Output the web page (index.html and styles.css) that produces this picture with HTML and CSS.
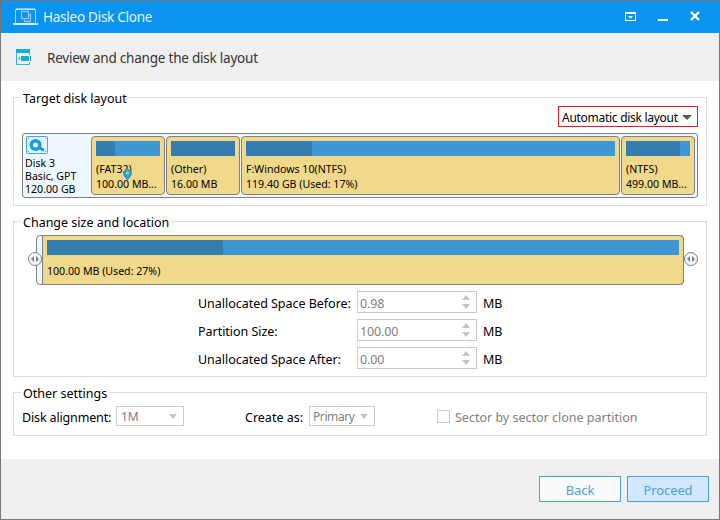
FILE: index.html
```html
<!DOCTYPE html>
<html lang="en">
<head>
    <meta charset="UTF-8" />
    <title>Hasleo Disk Clone</title>
    <link rel="stylesheet" href="styles.css">
</head>
<body>
    <div class="window">
        <div class="titlebar">
            <svg class="logo" width="26" height="18" viewBox="0 0 26 18" fill="none" stroke="#9fd2fa">
                <path d="M2.500 15V1.500h20V15" />
                <path d="M3 1h19" stroke="#e8f5ff" />
                <path d="M0 16h25" stroke="#d5ecfd" stroke-width="2" />
                <rect x="8.500" y="3.500" width="7" height="7" stroke="#8fcaf8" stroke-width="1.300" />
                <path d="M15.500 6.500h2v7h-6v-3" stroke="#8fcaf8" stroke-width="1.300" />
            </svg>
            <span class="app-name">Hasleo Disk Clone</span>
            <svg class="win-icons" width="77" height="12" viewBox="0 0 77 12">
                <path d="M0 1h11v9H0zM1 3v6h9V3z" fill="#fff" fill-rule="evenodd" />
                <path d="M3 5h5L5.500 7.800z" fill="#fff" />
                <path d="M33 8h10v2H33z" fill="#fff" />
                <path d="M66 1l8 8M74 1l-8 8" stroke="#fff" stroke-width="2.400" />
            </svg>
        </div>

        <div class="header">
            <svg width="15" height="16" viewBox="0 0 15 16" fill="#0caedb">
                <path d="M0 0h14v4H0z" />
                <path d="M.5 4v11.500h13V13M13.500 4v2" fill="none" stroke="#29b5dc" />
                <path d="M5 7h8v5H5zM2 9.500l2-1.500v3zM14 7h1v5h-1z" />
            </svg>
            <span>Review and change the disk layout</span>
        </div>

        <div class="content">
            <div class="group group-layout">
                <span class="group-title">Target disk layout</span>
                <div class="select select-layout">
                    <span>Automatic disk layout</span>
                    <i class="arrow"></i>
                </div>
                <div class="disk">
                    <div class="disk-info">
                        <svg width="22" height="18" viewBox="0 0 22 18">
                            <rect x=".5" y=".5" width="21" height="17" rx="1" fill="#e4f5fd" stroke="#35a9e1" />
                            <circle cx="9.500" cy="9" r="4.300" fill="none" stroke="#1e9bdc" stroke-width="3.600" />
                            <path d="M12.500 11l5.500 3.500" stroke="#1e9bdc" stroke-width="3" />
                            <path d="M2 2h1v1H2zM19 2h1v1h-1zM2 15h1v1H2zM19 15h1v1h-1z" fill="#1e9bdc" />
                        </svg>
                        <span>Disk 3</span>
                        <span>Basic, GPT</span>
                        <span>120.00 GB</span>
                    </div>
                    <div class="part">
                        <div class="bar"><div class="used" style="width: 19px"></div></div>
                        <span>(FAT32)</span>
                        <span>100.00 MB...</span>
                        <svg class="pin" width="9" height="12" viewBox="0 0 9 12">
                            <path d="M4.500 0A4.500 4.500 0 0 0 0 4.500C0 7 3 9 4.500 12 6 9 9 7 9 4.500A4.500 4.500 0 0 0 4.500 0z" fill="#2a9fda" />
                            <circle cx="4.500" cy="4" r="1.500" fill="#cfc98c" />
                        </svg>
                    </div>
                    <div class="part">
                        <div class="bar"><div class="used" style="width: 100%"></div></div>
                        <span>(Other)</span>
                        <span>16.00 MB</span>
                    </div>
                    <div class="part part-main">
                        <div class="bar"><div class="used" style="width: 66px"></div></div>
                        <span>F:Windows 10(NTFS)</span>
                        <span>119.40 GB (Used: 17%)</span>
                    </div>
                    <div class="part">
                        <div class="bar"><div class="used" style="width: 54px"></div></div>
                        <span>(NTFS)</span>
                        <span>499.00 MB...</span>
                    </div>
                </div>
            </div>

            <div class="group group-size">
                <span class="group-title">Change size and location</span>
                <div class="resizer">
                    <div class="track">
                        <div class="part part-resize">
                            <div class="bar"><div class="used" style="width: 176px"></div></div>
                            <span>100.00 MB (Used: 27%)</span>
                        </div>
                    </div>
                    <svg class="handle handle-left" width="14" height="14" viewBox="0 0 14 14">
                        <circle cx="7" cy="7" r="6.500" fill="#eef7fd" stroke="#808080" />
                        <path d="M6 4v6L3 7zM8 4v6l3-3z" fill="#808080" />
                    </svg>
                    <svg class="handle handle-right" width="14" height="14" viewBox="0 0 14 14">
                        <circle cx="7" cy="7" r="6.500" fill="#eef7fd" stroke="#808080" />
                        <path d="M6 4v6L3 7zM8 4v6l3-3z" fill="#808080" />
                    </svg>
                </div>
                <div class="fields">
                    <label>Unallocated Space Before:</label>
                    <div class="spin"><span>0.98</span><i class="up"></i><i class="arrow"></i></div>
                    <span>MB</span>
                    <label>Partition Size:</label>
                    <div class="spin"><span>100.00</span><i class="up"></i><i class="arrow"></i></div>
                    <span>MB</span>
                    <label>Unallocated Space After:</label>
                    <div class="spin"><span>0.00</span><i class="up"></i><i class="arrow"></i></div>
                    <span>MB</span>
                </div>
            </div>

            <div class="group group-other">
                <span class="group-title">Other settings</span>
                <div class="settings">
                    <label class="lbl-align">Disk alignment:</label>
                    <div class="select select-align"><span>1M</span><i class="arrow"></i></div>
                    <label class="lbl-create">Create as:</label>
                    <div class="select select-create"><span>Primary</span><i class="arrow"></i></div>
                    <div class="checkbox"></div>
                    <label class="lbl-sector">Sector by sector clone partition</label>
                </div>
            </div>
        </div>

        <div class="footer">
            <div class="btn">Back</div>
            <div class="btn btn-primary">Proceed</div>
        </div>
    </div>
</body>
</html>
```
FILE: styles.css
```css
* {
    box-sizing: border-box;
}
body {
    margin: 0;
    font-family: "Noto Sans", "Open Sans", sans-serif;
    font-size: 12.5px;
    color: #000;
}
svg {
    display: block;
    flex: none;
}
span, label {
    white-space: nowrap;
}
.window {
    width: 720px;
    height: 520px;
    border: 1px solid #777;
    background: #fff;
    display: flex;
    flex-direction: column;
}
.titlebar {
    height: 32px;
    background: #0b93f0;
    display: flex;
    align-items: center;
    padding: 0 17px 0 12px;
}
.app-name {
    color: #e8f5ff;
    font-size: 13.5px;
    letter-spacing: -0.25px;
    margin-left: 4px;
    flex: 1;
}
.header {
    height: 48px;
    background: #efefef;
    display: flex;
    align-items: center;
    gap: 16px;
    padding: 2px 15px 0;
    font-size: 13.5px;
    letter-spacing: -0.22px;
    color: #333;
}
.header svg {
    margin-top: -2px;
}
.content {
    height: 378px;
    padding: 16px 12px 0;
}
.group {
    position: relative;
    border: 1px solid #dcdcdc;
}
.group-title {
    position: absolute;
    top: -8px;
    left: 7px;
    padding: 0 2px;
    background: #fff;
    line-height: 18px;
}
.group-layout {
    height: 109px;
    padding: 8px 8px 0;
}
.group-size {
    height: 156px;
    margin-top: 15px;
    padding: 13px 21px 0 22px;
}
.group-other {
    height: 44px;
    margin-top: 15px;
    padding: 13px 8px 0;
}

/* selects */
.select {
    height: 20px;
    border: 1px solid #ccc;
    display: flex;
    align-items: center;
    justify-content: space-between;
    padding: 0 6px 0 4px;
    color: #808080;
}
.select-layout {
    width: 140px;
    height: 21px;
    margin: 0 0 6px auto;
    border: 1px solid #e81c24;
    padding: 2px 5px 0 3px;
    font-size: 12px;
    letter-spacing: -0.28px;
    color: #000;
}
.arrow {
    border: 4px solid transparent;
    border-top: 5px solid #c4c4c4;
    border-bottom: none;
}
.up {
    border: 4px solid transparent;
    border-bottom: 5px solid #c4c4c4;
    border-top: none;
}
.select-layout .arrow {
    border-top-color: #555;
    border-left-width: 5px;
    border-right-width: 5px;
}

/* disk map */
.disk {
    height: 65px;
    width: 676px;
    border: 1px solid #808080;
    border-radius: 3px;
    background: #eef7fd;
    display: flex;
    gap: 1px;
    padding: 2px;
    font-size: 10.6px;
}
.disk-info {
    width: 65px;
    display: flex;
    flex-direction: column;
    line-height: 13px;
}
.disk-info svg {
    margin: 0 0 3px 1px;
}
.part {
    position: relative;
    width: 74px;
    height: 59px;
    border: 1px solid #808080;
    border-radius: 4px;
    background: #f0d98a;
    padding: 4px;
    display: flex;
    flex-direction: column;
    line-height: 15px;
}
.part-main {
    flex: 1;
}
.bar {
    height: 15px;
    background: #3e97d3;
    margin-bottom: 6px;
}
.used {
    height: 15px;
    background: #347dae;
}
.pin {
    position: absolute;
    left: 31px;
    top: 32px;
}

/* partition resizer */
.resizer {
    position: relative;
    font-size: 10.6px;
}
.track {
    width: 648px;
    height: 50px;
    border: 1px solid #808080;
    border-radius: 4px;
    background: #eef7fd;
    padding-left: 5px;
}
.part-resize {
    width: 642px;
    height: 50px;
    margin-top: -1px;
    border-radius: 0 4px 4px 0;
}
.part-resize .bar {
    margin-bottom: 9px;
}
.handle {
    position: absolute;
    top: 17px;
}
.handle-left {
    left: -8px;
}
.handle-right {
    right: -13px;
}
.fields {
    display: grid;
    grid-template-columns: 159px 120px auto;
    row-gap: 6px;
    align-items: center;
    padding: 6px 0 0 162px;
}
.fields > span {
    margin-left: 6px;
}
.fields > span, .fields label {
    padding-top: 2px;
}
.fields label {
    letter-spacing: -0.03px;
}
.spin {
    height: 22px;
    border: 1px solid #c8c8c8;
    color: #808080;
    display: grid;
    grid-template-columns: 1fr 8px;
    grid-template-rows: 5px 5px;
    row-gap: 4px;
    padding: 3px 6px 0 2px;
    letter-spacing: -0.15px;
}
.spin span {
    grid-row: 1 / 3;
    line-height: 18px;
}

/* other settings */
.settings {
    display: flex;
    align-items: center;
    height: 20px;
}
.settings label {
    padding-top: 2px;
}
.lbl-align {
    width: 94px;
    letter-spacing: -0.15px;
}
.select-align {
    width: 68px;
    font-size: 12px;
}
.lbl-create {
    margin-left: 61px;
    width: 64px;
}
.select-create {
    width: 66px;
    padding-left: 3px;
    font-size: 12px;
    letter-spacing: -0.4px;
}
.checkbox {
    width: 13px;
    height: 13px;
    border: 1px solid #c8c8c8;
    margin: 1px 5px 0 62px;
}
.lbl-sector {
    color: #808080;
}

.footer {
    height: 60px;
    background: #efefef;
    display: flex;
    justify-content: flex-end;
    gap: 6px;
    padding: 17px 10px 0;
}
.btn {
    width: 82px;
    height: 26px;
    border: 1px solid #4ba0e0;
    background: #f9fafc;
    color: #4ba0e0;
    font-size: 13px;
    letter-spacing: -0.1px;
    line-height: 26px;
    text-align: center;
}
.btn-primary {
    background: #d1e8ff;
}
```
